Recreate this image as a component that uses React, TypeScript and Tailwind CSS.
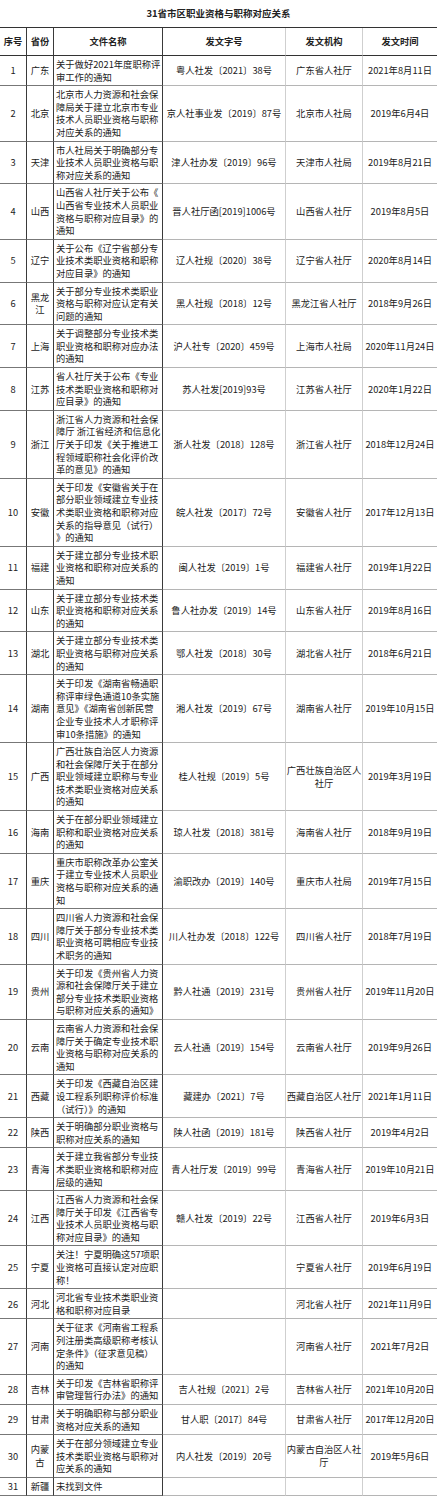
const rows = [
  { no: 1, prov: ["广东"], title: ["关于做好2021年度职称评", "审工作的通知"], code: "粤人社发〔2021〕38号", org: ["广东省人社厅"], date: "2021年8月11日" },
  { no: 2, prov: ["北京"], title: ["北京市人力资源和社会保", "障局关于建立北京市专业", "技术人员职业资格与职称", "对应关系的通知"], code: "京人社事业发〔2019〕87号", org: ["北京市人社局"], date: "2019年6月4日" },
  { no: 3, prov: ["天津"], title: ["市人社局关于明确部分专", "业技术人员职业资格与职", "称对应关系的通知"], code: "津人社办发〔2019〕96号", org: ["天津市人社局"], date: "2019年8月21日" },
  { no: 4, prov: ["山西"], title: ["山西省人社厅关于公布《", "山西省专业技术人员职业", "资格与职称对应目录》的", "通知"], code: "晋人社厅函[2019]1006号", org: ["山西省人社厅"], date: "2019年8月5日" },
  { no: 5, prov: ["辽宁"], title: ["关于公布《辽宁省部分专", "业技术类职业资格和职称", "对应目录》的通知"], code: "辽人社规〔2020〕38号", org: ["辽宁省人社厅"], date: "2020年8月14日" },
  { no: 6, prov: ["黑龙", "江"], title: ["关于部分专业技术类职业", "资格与职称对应认定有关", "问题的通知"], code: "黑人社规〔2018〕12号", org: ["黑龙江省人社厅"], date: "2018年9月26日" },
  { no: 7, prov: ["上海"], title: ["关于调整部分专业技术类", "职业资格和职称对应办法", "的通知"], code: "沪人社专〔2020〕459号", org: ["上海市人社局"], date: "2020年11月24日" },
  { no: 8, prov: ["江苏"], title: ["省人社厅关于公布《专业", "技术类职业资格和职称对", "应目录》的通知"], code: "苏人社发[2019]93号", org: ["江苏省人社厅"], date: "2020年1月22日" },
  { no: 9, prov: ["浙江"], title: ["浙江省人力资源和社会保", "障厅 浙江省经济和信息化", "厅关于印发《关于推进工", "程领域职称社会化评价改", "革的意见》的通知"], code: "浙人社发〔2018〕128号", org: ["浙江省人社厅"], date: "2018年12月24日" },
  { no: 10, prov: ["安徽"], title: ["关于印发《安徽省关于在", "部分职业领域建立专业技", "术类职业资格和职称对应", "关系的指导意见（试行）", "》的通知"], code: "皖人社发〔2017〕72号", org: ["安徽省人社厅"], date: "2017年12月13日" },
  { no: 11, prov: ["福建"], title: ["关于建立部分专业技术职", "业资格和职称对应关系的", "通知"], code: "闽人社发〔2019〕1号", org: ["福建省人社厅"], date: "2019年1月22日" },
  { no: 12, prov: ["山东"], title: ["关于建立部分专业技术类", "职业资格和职称对应关系", "的通知"], code: "鲁人社办发〔2019〕14号", org: ["山东省人社厅"], date: "2019年8月16日" },
  { no: 13, prov: ["湖北"], title: ["关于建立部分专业技术类", "职业资格与职称对应关系", "的通知"], code: "鄂人社发〔2018〕30号", org: ["湖北省人社厅"], date: "2018年6月21日" },
  { no: 14, prov: ["湖南"], title: ["关于印发《湖南省畅通职", "称评审绿色通道10条实施", "意见》《湖南省创新民营", "企业专业技术人才职称评", "审10条措施》的通知"], code: "湘人社发〔2019〕67号", org: ["湖南省人社厅"], date: "2019年10月15日" },
  { no: 15, prov: ["广西"], title: ["广西壮族自治区人力资源", "和社会保障厅关于在部分", "职业领域建立职称与专业", "技术类职业资格对应关系", "的通知"], code: "桂人社规〔2019〕5号", org: ["广西壮族自治区人", "社厅"], date: "2019年3月19日" },
  { no: 16, prov: ["海南"], title: ["关于在部分职业领域建立", "职称和职业资格对应关系", "的通知"], code: "琼人社发〔2018〕381号", org: ["海南省人社厅"], date: "2018年9月19日" },
  { no: 17, prov: ["重庆"], title: ["重庆市职称改革办公室关", "于建立专业技术人员职业", "资格与职称对应关系的通", "知"], code: "渝职改办〔2019〕140号", org: ["重庆市人社局"], date: "2019年7月15日" },
  { no: 18, prov: ["四川"], title: ["四川省人力资源和社会保", "障厅关于部分专业技术类", "职业资格可聘相应专业技", "术职务的通知"], code: "川人社办发〔2018〕122号", org: ["四川省人社厅"], date: "2018年7月19日" },
  { no: 19, prov: ["贵州"], title: ["关于印发《贵州省人力资", "源和社会保障厅关于建立", "部分专业技术类职业资格", "与职称对应关系的通知》"], code: "黔人社通〔2019〕231号", org: ["贵州省人社厅"], date: "2019年11月20日" },
  { no: 20, prov: ["云南"], title: ["云南省人力资源和社会保", "障厅关于确定专业技术职", "业资格与职称对应关系的", "通知"], code: "云人社通〔2019〕154号", org: ["云南省人社厅"], date: "2019年9月26日" },
  { no: 21, prov: ["西藏"], title: ["关于印发《西藏自治区建", "设工程系列职称评价标准", "（试行）》的通知"], code: "藏建办〔2021〕7号", org: ["西藏自治区人社厅"], date: "2021年1月11日" },
  { no: 22, prov: ["陕西"], title: ["关于明确部分职业资格与", "职称对应关系的通知"], code: "陕人社函〔2019〕181号", org: ["陕西省人社厅"], date: "2019年4月2日" },
  { no: 23, prov: ["青海"], title: ["关于建立我省部分专业技", "术类职业资格和职称对应", "层级的通知"], code: "青人社厅发〔2019〕99号", org: ["青海省人社厅"], date: "2019年10月21日" },
  { no: 24, prov: ["江西"], title: ["江西省人力资源和社会保", "障厅关于印发《江西省专", "业技术人员职业资格与职", "称对应目录》的通知"], code: "赣人社发〔2019〕22号", org: ["江西省人社厅"], date: "2019年6月3日" },
  { no: 25, prov: ["宁夏"], title: ["关注！宁夏明确这57项职", "业资格可直接认定对应职", "称！"], code: "", org: ["宁夏省人社厅"], date: "2019年6月19日" },
  { no: 26, prov: ["河北"], title: ["河北省专业技术类职业资", "格和职称对应目录"], code: "", org: ["河北省人社厅"], date: "2021年11月9日" },
  { no: 27, prov: ["河南"], title: ["关于征求《河南省工程系", "列注册类高级职称考核认", "定条件》（征求意见稿）", "的通知"], code: "", org: ["河南省人社厅"], date: "2021年7月2日" },
  { no: 28, prov: ["吉林"], title: ["关于印发《吉林省职称评", "审管理暂行办法》的通知"], code: "吉人社规〔2021〕2号", org: ["吉林省人社厅"], date: "2021年10月20日" },
  { no: 29, prov: ["甘肃"], title: ["关于明确职称与部分职业", "资格对应关系的通知"], code: "甘人职〔2017〕84号", org: ["甘肃省人社厅"], date: "2017年12月20日" },
  { no: 30, prov: ["内蒙", "古"], title: ["关于在部分领域建立专业", "技术类职业资格与职称对", "应关系的通知"], code: "内人社发〔2019〕20号", org: ["内蒙古自治区人社", "厅"], date: "2019年5月6日" },
  { no: 31, prov: ["新疆"], title: ["未找到文件"], code: "", org: [], date: "" },
]

const headers = ["序号", "省份", "文件名称", "发文字号", "发文机构", "发文时间"]

function Lines({ lines }: { lines: string[] }) {
  return (
    <>
      {lines.map((line, i) => (
        <span key={i} className="block whitespace-nowrap">
          {line}
        </span>
      ))}
    </>
  )
}

const dark = "border-r border-r-[#3a3a3a]"
const light = "border-r border-r-[#cfcfcf]"

export default function App() {
  return (
    <div className="w-[437px] bg-white text-[#222] font-['Noto_Sans_CJK_SC','Noto_Sans',sans-serif] text-[9.3px] leading-[12.6px]">
      <div className="h-[27px] flex items-center justify-center font-bold text-[9.5px]">31省市区职业资格与职称对应关系</div>
      <table className="w-[437px] table-fixed border-separate border-spacing-0 border-t border-t-[#333]">
        <colgroup>
          <col className="w-[27px]" />
          <col className="w-[27px]" />
          <col className="w-[109px]" />
          <col className="w-[123px]" />
          <col className="w-[77px]" />
          <col className="w-[74px]" />
        </colgroup>
        <thead>
          <tr className="h-[28px]">
            {headers.map((h, i) => (
              <th
                key={h}
                className={`p-0 font-bold text-center align-middle border-b border-b-[#333] ${i < 3 ? dark : i < 5 ? light : ""}`}
              >
                {h}
              </th>
            ))}
          </tr>
        </thead>
        <tbody>
          {rows.map((r) => (
            <tr key={r.no}>
              <td className={`px-0 py-[2px] text-center align-middle border-b border-b-[#777] ${dark}`}>{r.no}</td>
              <td className={`px-0 py-[2px] text-center align-middle border-b border-b-[#777] ${dark}`}>
                <Lines lines={r.prov} />
              </td>
              <td className={`pl-[2px] pr-0 py-[2px] text-left align-middle border-b border-b-[#777] ${dark}`}>
                <Lines lines={r.title} />
              </td>
              <td className={`px-0 py-[2px] text-center align-middle whitespace-nowrap border-b border-b-[#b5b5b5] ${light}`}>{r.code}</td>
              <td className={`px-0 py-[2px] text-center align-middle border-b border-b-[#b5b5b5] ${light}`}>
                <Lines lines={r.org} />
              </td>
              <td className="px-0 py-[2px] text-center align-middle whitespace-nowrap border-b border-b-[#b5b5b5]">{r.date}</td>
            </tr>
          ))}
        </tbody>
      </table>
    </div>
  )
}
